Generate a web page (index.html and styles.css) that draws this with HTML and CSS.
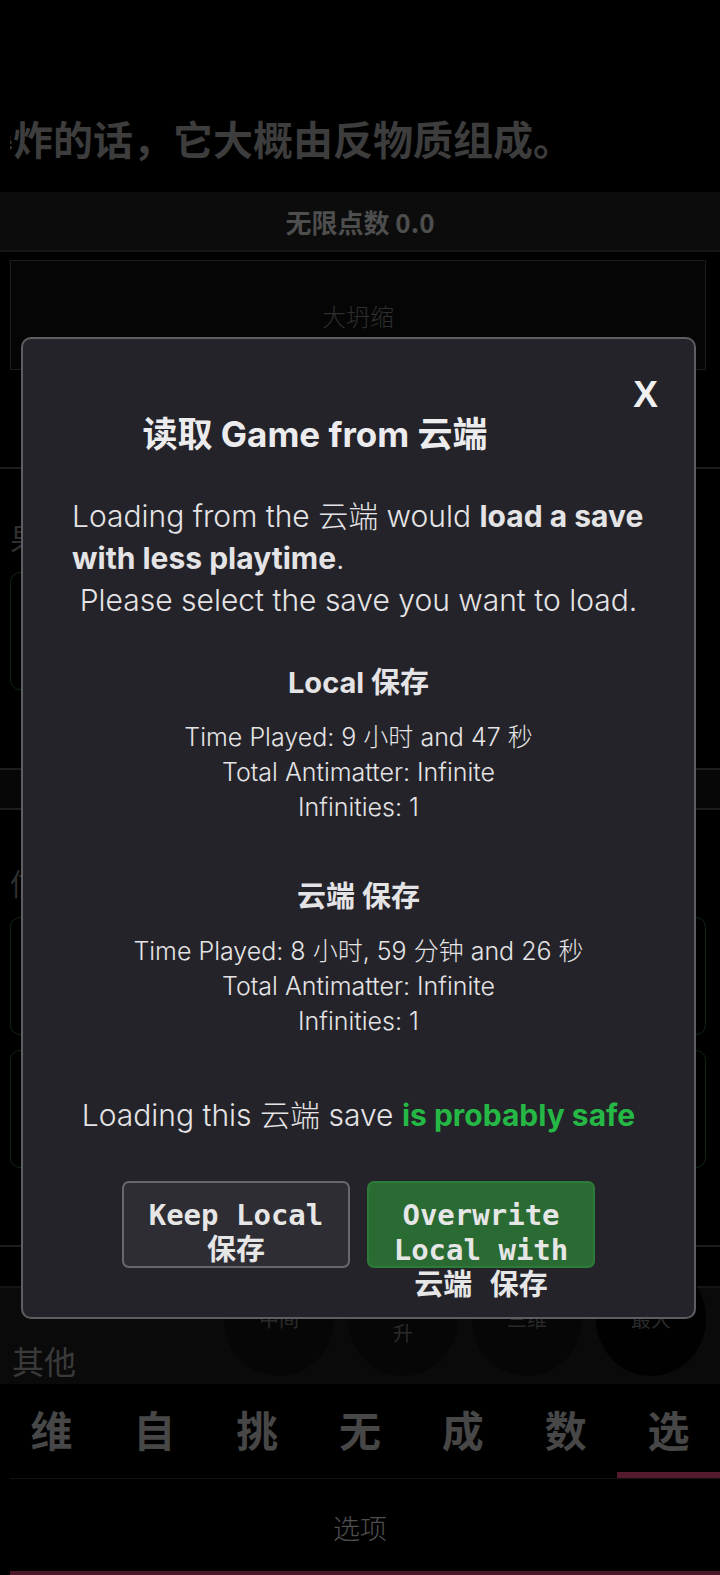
FILE: index.html
```html
<!DOCTYPE html>
<html lang="zh">
<head>
  <meta charset="UTF-8">
  <meta name="viewport" content="width=device-width, initial-scale=1.0">
  <title>Antimatter Dimensions</title>
  <link rel="stylesheet" href="styles.css">
</head>
<body>
  <div class="page">
    <div class="news">
      <p class="news-text">爆炸的话，它大概由反物质组成。</p>
    </div>
    <div class="points-bar">无限点数 0.0</div>
    <div class="crunch-box">大坍缩</div>

    <div class="section section-one">
      <div class="section-title">果实</div>
      <div class="green-box short"></div>
    </div>
    <div class="section-band"></div>
    <div class="section section-two">
      <div class="section-title">信息</div>
      <div class="green-box"></div>
      <div class="green-box"></div>
    </div>
    <div class="thin-row"></div>
    <div class="other-row">
      <div class="other-label">其他</div>
      <div class="circles">
        <div class="circle">中间</div>
        <div class="circle">提<br>升</div>
        <div class="circle">三维</div>
        <div class="circle dark">最大</div>
      </div>
    </div>

    <div class="tabs">
      <div class="tab">维</div>
      <div class="tab">自</div>
      <div class="tab">挑</div>
      <div class="tab">无</div>
      <div class="tab">成</div>
      <div class="tab">数</div>
      <div class="tab active">选</div>
    </div>
    <div class="subtabs">
      <div class="subtab">选项</div>
    </div>
  </div>

  <div class="modal">
    <button class="modal-close">X</button>
    <h1 class="modal-title">读取 Game from 云端</h1>
    <p class="modal-intro">Loading from the 云端 would <b>load a save with less playtime</b>.</p>
    <p class="modal-line">Please select the save you want to load.</p>

    <div class="save-info">
      <h2>Local 保存</h2>
      <div>Time Played: 9 小时 and 47 秒</div>
      <div>Total Antimatter: Infinite</div>
      <div>Infinities: 1</div>
    </div>

    <div class="save-info">
      <h2>云端 保存</h2>
      <div>Time Played: 8 小时, 59 分钟 and 26 秒</div>
      <div>Total Antimatter: Infinite</div>
      <div>Infinities: 1</div>
    </div>

    <p class="modal-line safe-line">Loading this 云端 save <b class="safe">is probably safe</b></p>

    <div class="modal-buttons">
      <button class="modal-btn">Keep Local 保存</button>
      <button class="modal-btn btn-green">Overwrite Local with 云端 保存</button>
    </div>
  </div>
</body>
</html>
```

FILE: styles.css
```css
body, html {
  margin: 0;
  padding: 0;
  width: 100%;
  height: 100%;
  background-color: #000;
  overflow: hidden;
  font-family: "Noto Sans CJK SC", sans-serif;
}
.page {
  width: 720px;
  display: flex;
  flex-direction: column;
}
.news {
  height: 190px;
  margin-left: 10px;
  display: flex;
  align-items: flex-end;
  overflow: hidden;
}
.news-text {
  margin: 0 0 30px -37px;
  white-space: nowrap;
  font-size: 40px;
  font-weight: 700;
  line-height: 44px;
  color: #3d3d3d;
}
.points-bar {
  height: 58px;
  margin-top: 2px;
  display: flex;
  justify-content: center;
  align-items: center;
  background-color: #0c0c0c;
  border-bottom: 2px solid #161616;
  color: #4e4e4e;
  font-size: 26px;
  font-weight: 700;
}
.crunch-box {
  margin: 8px 14px 0 10px;
  height: 108px;
  border: 1px solid #1c1c1c;
  background-color: #050505;
  display: flex;
  justify-content: center;
  align-items: center;
  color: #2e2e2e;
  font-size: 24px;
  font-weight: 300;
}
.section {
  box-sizing: border-box;
  border-top: 2px solid #1d1d1d;
  display: flex;
  flex-direction: column;
  padding: 0 14px 0 10px;
}
.section-one {
  margin-top: 97px;
  height: 301px;
  padding-top: 51px;
}
.section-two {
  height: 437px;
  padding-top: 55px;
}
.section-title {
  margin-bottom: 18px;
  color: #2f2f2f;
  font-size: 30px;
  line-height: 34px;
}
.green-box {
  height: 118px;
  box-sizing: border-box;
  border: 1px solid #0f2612;
  border-radius: 10px;
}
.green-box + .green-box {
  margin-top: 15px;
}
.green-box.short {
  width: 300px;
}
.section-band {
  height: 38px;
  border-top: 2px solid #1d1d1d;
  background-color: #070707;
}
.thin-row {
  height: 39px;
  border-top: 2px solid #1d1d1d;
  border-bottom: 2px solid #141414;
}
.other-row {
  height: 96px;
  box-sizing: border-box;
  background-color: #0a0a0a;
  display: flex;
  align-items: flex-end;
  justify-content: space-between;
  padding: 0 14px 4px 12px;
}
.other-label {
  color: #3a3a3a;
  font-size: 32px;
  line-height: 40px;
}
.circles {
  display: flex;
  gap: 14px;
  align-self: flex-end;
  margin-bottom: 4px;
}
.circle {
  width: 110px;
  height: 115px;
  border-radius: 50%;
  background-color: #060606;
  display: flex;
  justify-content: center;
  align-items: center;
  text-align: center;
  color: #2a2a2a;
  font-size: 20px;
  line-height: 28px;
}
.circle.dark {
  background-color: #010101;
}
.tabs {
  height: 94px;
  box-sizing: border-box;
  display: flex;
  background-color: #000;
}
.tab {
  flex: 1;
  display: flex;
  justify-content: center;
  align-items: center;
  color: #474747;
  font-size: 42px;
  font-weight: 700;
  border-bottom: 6px solid transparent;
}
.tab.active {
  border-bottom-color: #561a2f;
}
.subtabs {
  height: 92px;
  display: flex;
  justify-content: center;
  align-items: center;
  border-top: 1px solid #111;
  border-bottom: 5px solid #4a1628;
  margin-left: 10px;
}
.subtab {
  margin: 4px 0 0 -10px;
  color: #4f4f4f;
  font-size: 27px;
  font-weight: 300;
}

/* Cloud load dialog */
.modal {
  position: fixed;
  top: 337px;
  left: 21px;
  width: 675px;
  box-sizing: border-box;
  padding: 0 0 49px;
  background-color: #242329;
  border: 2px solid #5e5e62;
  border-radius: 10px;
  color: #e4e4e6;
  font-family: Inter, "Noto Sans CJK SC", sans-serif;
  text-align: center;
}
.modal-close {
  position: absolute;
  top: 38px;
  right: 36px;
  padding: 0;
  background: none;
  border: none;
  color: #f0f0f0;
  font-family: "Liberation Sans", sans-serif;
  font-size: 37px;
  font-weight: 700;
  line-height: 36px;
}
.modal-title {
  margin: 75px 87px 0 0;
  font-size: 35px;
  font-weight: 700;
  line-height: 40px;
  color: #ececee;
}
.modal-intro {
  width: 573px;
  margin: 41px auto 0;
  text-align: left;
  font-size: 30px;
  font-weight: 300;
  line-height: 42px;
}
.modal-intro b,
.modal-line b {
  font-weight: 700;
}
.modal-line {
  margin: 0;
  font-size: 30px;
  font-weight: 300;
  line-height: 42px;
}
.save-info {
  margin-top: 44px;
  font-size: 25px;
  font-weight: 300;
  line-height: 35px;
}
.save-info + .save-info {
  margin-top: 54px;
}
.save-info h2 {
  margin: 0 0 19px;
  font-size: 29px;
  font-weight: 700;
  line-height: 36px;
}
.safe-line {
  margin-top: 55px;
}
.safe {
  color: #25b845;
}
.modal-buttons {
  margin-top: 45px;
  display: flex;
  justify-content: center;
  gap: 17px;
}
.modal-btn {
  width: 228px;
  height: 87px;
  box-sizing: border-box;
  padding: 15px 10px 0;
  display: block;
  background-color: #2e2d33;
  border: 2px solid #68686c;
  border-radius: 7px;
  color: #e6e6e6;
  font-family: "DejaVu Sans Mono", "Noto Sans CJK SC", monospace;
  font-size: 29px;
  font-weight: 700;
  line-height: 35px;
  text-align: center;
  vertical-align: top;
}
.btn-green {
  background-color: #2a6a33;
  border-color: #2e7a38;
}
```
